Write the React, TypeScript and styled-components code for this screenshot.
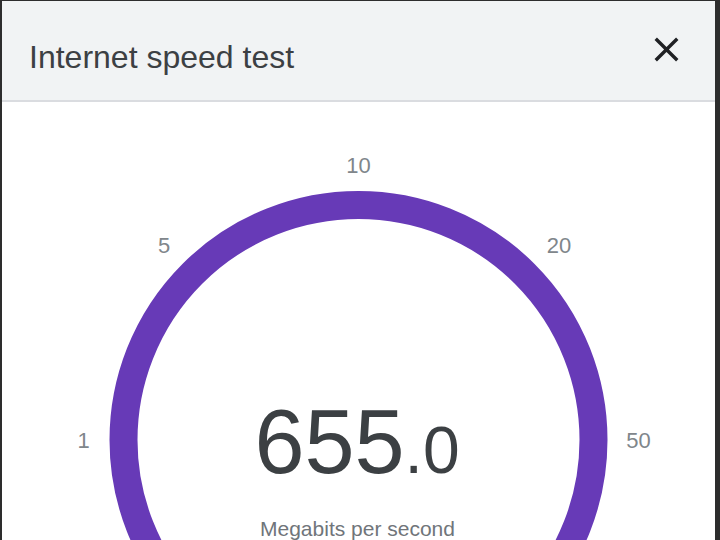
import React from "react";
import styled, { createGlobalStyle } from "styled-components";

const Global = createGlobalStyle`
  html, body { margin: 0; padding: 0; background: #2d2d2d; overflow: hidden; }
  body { font-family: "Liberation Sans", Arial, sans-serif; }
`;

const Dialog = styled.div`
  margin: 1px 5px 0 2px;
  height: 539px;
  background: #ffffff;
  display: flex;
  flex-direction: column;
  overflow: hidden;
`;

const Header = styled.header`
  height: 99px;
  flex: none;
  background: #f1f3f4;
  border-bottom: 2px solid #dadce0;
  display: flex;
  align-items: center;
  justify-content: space-between;
  padding: 0 28px 0 27px;
`;

const Title = styled.h1`
  margin: 0;
  padding-top: 13px;
  font-size: 32px;
  font-weight: 400;
  line-height: 36px;
  color: #3c4043;
`;

const CloseButton = styled.button`
  border: 0;
  padding: 0;
  margin: 0 0 3px 0;
  background: transparent;
  width: 41px;
  height: 41px;
  display: flex;
  cursor: pointer;
  svg { width: 41px; height: 41px; fill: #202124; }
`;

const GaugeArea = styled.section`
  position: relative;
  flex: 1;
  display: flex;
  flex-direction: column;
  align-items: center;
  padding-top: 295px;
`;

const GaugeSvg = styled.svg`
  position: absolute;
  left: 0;
  top: 0;
  width: 713px;
  height: 440px;
`;

const TickLabel = styled.text`
  font-family: "Liberation Sans", Arial, sans-serif;
  font-size: 22px;
  fill: #80868b;
`;

const Readout = styled.div`
  position: relative;
  margin-right: 3px;
  font-size: 90px;
  line-height: 90px;
  color: #3c4043;
  white-space: nowrap;
`;

const Decimal = styled.span`
  font-size: 66px;
  line-height: 1;
`;

const Unit = styled.div`
  position: relative;
  margin-top: 30px;
  margin-right: 2px;
  font-size: 21px;
  line-height: 24px;
  color: #70757a;
`;

const cx = 356.5;
const cy = 338;
const labelR = 275;

const ticks: { label: string; angle: number; dx: number }[] = [
  { label: "1", angle: 180, dx: 0 },
  { label: "5", angle: 135, dx: 0 },
  { label: "10", angle: 90, dx: 0 },
  { label: "20", angle: 45, dx: 6 },
  { label: "50", angle: 0, dx: 5 },
];

export default function App() {
  return (
    <>
      <Global />
      <Dialog>
        <Header>
          <Title>Internet speed test</Title>
          <CloseButton aria-label="Close">
            <svg viewBox="0 0 24 24">
              <path d="M19 6.41L17.59 5 12 10.59 6.41 5 5 6.41 10.59 12 5 17.59 6.41 19 12 13.41 17.59 19 19 17.59 13.41 12z" />
            </svg>
          </CloseButton>
        </Header>
        <GaugeArea>
          <GaugeSvg viewBox="0 0 713 440">
            <circle cx={cx} cy={cy} r={235} fill="none" stroke="#673ab7" strokeWidth={28} />
            {ticks.map((t) => {
              const a = (t.angle * Math.PI) / 180;
              return (
                <TickLabel
                  key={t.label}
                  x={cx + labelR * Math.cos(a) + t.dx}
                  y={cy - labelR * Math.sin(a)}
                  textAnchor="middle"
                  dominantBaseline="central"
                >
                  {t.label}
                </TickLabel>
              );
            })}
          </GaugeSvg>
          <Readout>
            655<Decimal>.0</Decimal>
          </Readout>
          <Unit>Megabits per second</Unit>
        </GaugeArea>
      </Dialog>
    </>
  );
}
